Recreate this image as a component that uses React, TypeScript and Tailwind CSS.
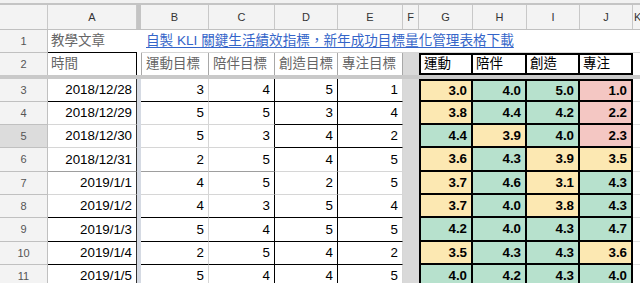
import React from 'react'

const sans = "font-['Liberation_Sans','Noto_Sans_CJK_TC',sans-serif]"

type Row = { n: number; h: string; date: string; vals: number[]; avg: string[] }

const rows: Row[] = [
  { n: 3, h: 'h-[23px]', date: '2018/12/28', vals: [3, 4, 5, 1], avg: ['3.0', '4.0', '5.0', '1.0'] },
  { n: 4, h: 'h-[23px]', date: '2018/12/29', vals: [5, 5, 3, 4], avg: ['3.8', '4.4', '4.2', '2.2'] },
  { n: 5, h: 'h-[23px]', date: '2018/12/30', vals: [5, 3, 4, 2], avg: ['4.4', '3.9', '4.0', '2.3'] },
  { n: 6, h: 'h-[24px]', date: '2018/12/31', vals: [2, 5, 4, 5], avg: ['3.6', '4.3', '3.9', '3.5'] },
  { n: 7, h: 'h-[23px]', date: '2019/1/1', vals: [4, 5, 2, 5], avg: ['3.7', '4.6', '3.1', '4.3'] },
  { n: 8, h: 'h-[23px]', date: '2019/1/2', vals: [4, 3, 5, 4], avg: ['3.7', '4.0', '3.8', '4.3'] },
  { n: 9, h: 'h-[24px]', date: '2019/1/3', vals: [5, 4, 5, 5], avg: ['4.2', '4.0', '4.3', '4.7'] },
  { n: 10, h: 'h-[23px]', date: '2019/1/4', vals: [2, 5, 4, 2], avg: ['3.5', '4.3', '4.3', '3.6'] },
  { n: 11, h: 'h-[23px]', date: '2019/1/5', vals: [5, 4, 4, 5], avg: ['4.0', '4.2', '4.3', '4.0'] },
]

// bottom border per data row: left block (A-C) and right block (D-E)
const lineLeft = ['border-b-black', 'border-b-[#d6d6d6]', 'border-b-[#d6d6d6]', 'border-b-[#9e9e9e]', 'border-b-[#d6d6d6]', 'border-b-black', 'border-b-black', 'border-b-black', 'border-b-[#d6d6d6]']
const lineRight = ['border-b-black', 'border-b-black', 'border-b-black', 'border-b-[#d6d6d6]', 'border-b-[#d6d6d6]', 'border-b-black', 'border-b-black', 'border-b-black', 'border-b-[#d6d6d6]']

const colW = ['w-[68px]', 'w-[66px]', 'w-[63px]', 'w-[65px]']
const avgW = ['w-[54px]', 'w-[54px]', 'w-[53px]', 'w-[53px]']
const vRight = ['border-r-[#d6d6d6]', 'border-r-black', 'border-r-black', 'border-r-[#d6d6d6]']

function scoreBg(v: string) {
  const x = parseFloat(v)
  if (x >= 4) return 'bg-[#b7e1cd]'
  if (x >= 3) return 'bg-[#fce8b2]'
  return 'bg-[#f4c7c3]'
}

function ColHead({ w, label }: { w: string; label: string }) {
  return (
    <div className={`${w} shrink-0 flex items-center justify-center border-r border-[#c8c8c8] text-[11px] text-[#333]`}>
      {label}
    </div>
  )
}

export default function App() {
  return (
    <div className={`w-[640px] h-[283px] overflow-hidden bg-white ${sans}`}>
      <div className="h-[3px] bg-[#f1f1f1]" />
      <div className="h-[2px] bg-[#c4c4c4]" />

      {/* column letters */}
      <div className="flex h-[25px] bg-[#f3f3f3] border-b border-[#c0c0c0]">
        <div className="w-[48px] shrink-0 border-r border-[#c8c8c8]" />
        <ColHead w="w-[89px]" label="A" />
        <div className="w-[4px] shrink-0 bg-[#c4c4c4]" />
        <ColHead w="w-[68px]" label="B" />
        <ColHead w="w-[66px]" label="C" />
        <ColHead w="w-[63px]" label="D" />
        <ColHead w="w-[65px]" label="E" />
        <ColHead w="w-[16px]" label="F" />
        <ColHead w="w-[54px]" label="G" />
        <ColHead w="w-[54px]" label="H" />
        <ColHead w="w-[53px]" label="I" />
        <ColHead w="w-[53px]" label="J" />
        <div className="flex-1 flex items-center text-[11px] text-[#333] pl-[1px]">K</div>
      </div>

      {/* row 1 */}
      <div className="flex h-[23px]">
        <div className="w-[48px] shrink-0 flex items-center justify-center bg-[#f3f3f3] border-r border-b border-[#c0c0c0] text-[11px] text-[#555]">1</div>
        <div className="w-[89px] shrink-0 flex items-center pl-[3px] border-b border-black text-[13.5px] text-[#666]">教學文章</div>
        <div className="w-[4px] shrink-0" />
        <div className="flex-1 flex items-center pl-[5px] border-b border-[#d6d6d6] whitespace-nowrap">
          <span className="text-[13.6px] text-[#3465c9] underline underline-offset-2">自製 KLI 關鍵生活績效指標，新年成功目標量化管理表格下載</span>
        </div>
      </div>

      {/* row 2 */}
      <div className="flex h-[22px]">
        <div className="w-[48px] shrink-0 flex items-center justify-center bg-[#f3f3f3] border-r border-[#c0c0c0] text-[11px] text-[#555]">2</div>
        <div className="w-[89px] shrink-0 flex items-center pl-[3px] border-r border-black text-[13.5px] text-[#666]">時間</div>
        <div className="w-[4px] shrink-0" />
        {['運動目標', '陪伴目標', '創造目標', '專注目標'].map((t, i) => (
          <div key={t} className={`${colW[i]} shrink-0 flex items-center pl-[4px] border-r border-[#a8a8a8] ${i === 0 ? 'border-l' : ''} text-[13.5px] text-[#666] whitespace-nowrap`}>
            {t}
          </div>
        ))}
        <div className="w-[16px] shrink-0 bg-[#d9d9d9]" />
        {['運動', '陪伴', '創造', '專注'].map((t, i) => (
          <div key={t} className={`${avgW[i]} shrink-0 flex items-center pl-[3px] border-t-2 border-b-2 border-r-2 border-black ${i === 0 ? 'border-l-2' : ''} text-[13.5px] text-black`}>
            {t}
          </div>
        ))}
        <div className="flex-1" />
      </div>

      {/* frozen rows divider */}
      <div className="h-[4px] bg-[#c9c9c9]" />

      {rows.map((r, ri) => (
        <div key={r.n} className={`flex ${r.h}`}>
          <div className={`w-[48px] shrink-0 flex items-center justify-center border-r border-b border-[#c0c0c0] text-[11px] text-[#555] ${r.n === 5 ? 'bg-[#dcdcdc]' : 'bg-[#f3f3f3]'}`}>
            {r.n}
          </div>
          <div className={`w-[89px] shrink-0 flex items-center justify-end pr-[4px] border-r border-r-[#333] border-b ${lineLeft[ri]} text-[13.33px] text-black`}>
            {r.date}
          </div>
          <div className="w-[4px] shrink-0 bg-[#d5dae3]" />
          {r.vals.map((v, i) => (
            <div key={i} className={`${colW[i]} shrink-0 flex items-center justify-end pr-[4px] border-r border-b ${vRight[i]} ${i < 2 ? lineLeft[ri] : lineRight[ri]} text-[13.33px] text-black`}>
              {v}
            </div>
          ))}
          <div className="w-[16px] shrink-0 bg-[#d9d9d9]" />
          {r.avg.map((v, i) => (
            <div key={i} className={`${avgW[i]} shrink-0 flex items-center justify-end pr-[4px] border-r-2 border-b-2 border-black ${i === 0 ? 'border-l-2' : ''} ${ri === 0 ? 'border-t-2' : ''} ${scoreBg(v)} text-[13.33px] font-bold text-black`}>
              {v}
            </div>
          ))}
          <div className="flex-1 border-b border-[#e2e2e2]" />
        </div>
      ))}
    </div>
  )
}
